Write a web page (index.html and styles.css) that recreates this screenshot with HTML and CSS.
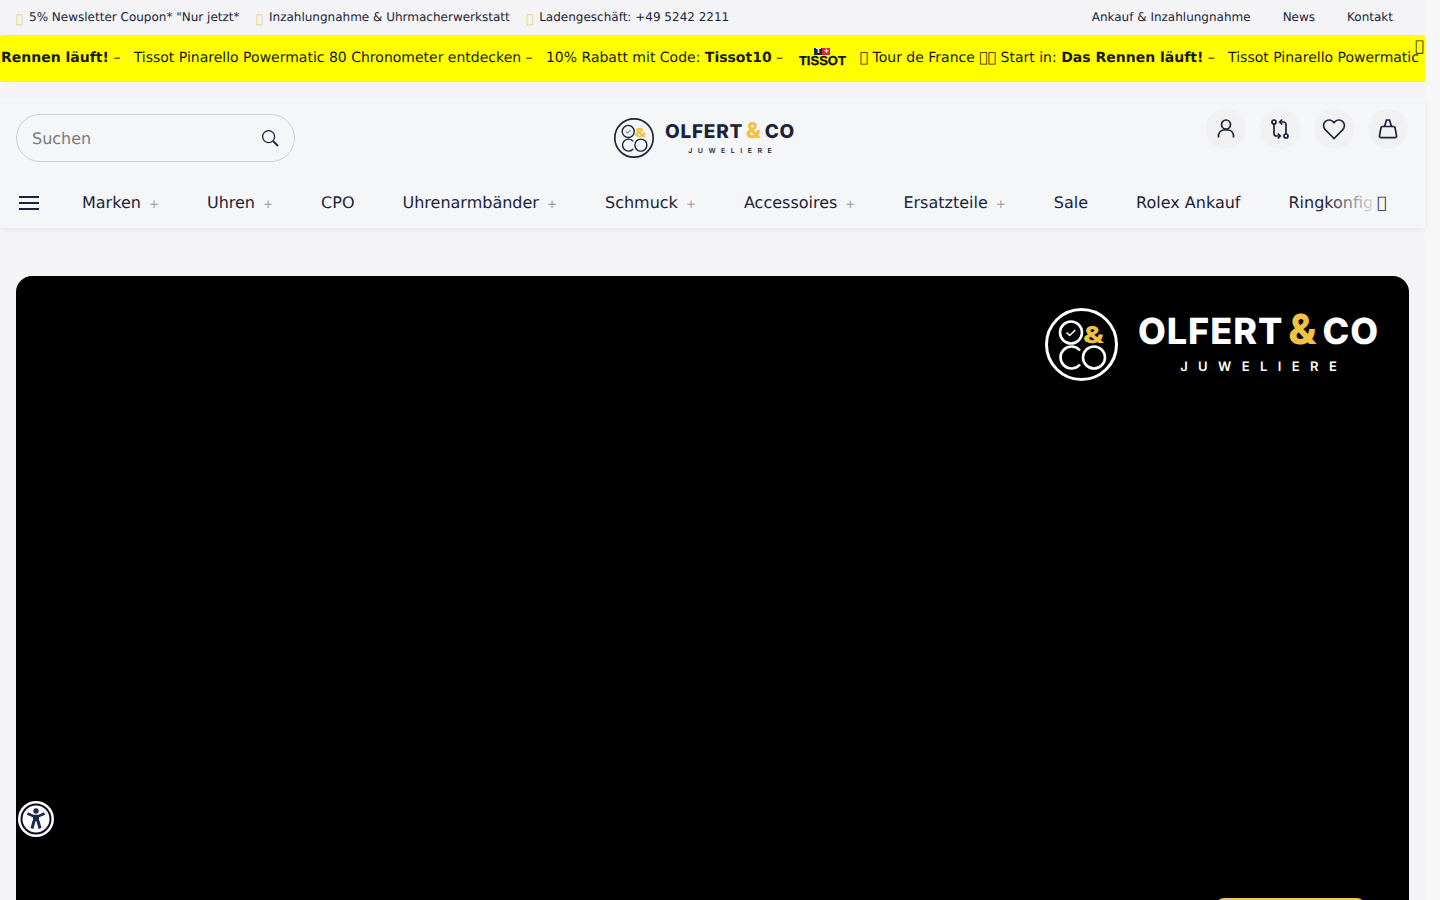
FILE: index.html
```html
<!DOCTYPE html>
<html lang="de">
<head>
  <meta charset="UTF-8">
  <title>Olfert &amp; Co Juweliere</title>
  <link rel="stylesheet" href="styles.css">
</head>
<body>
  <svg class="defs" width="0" height="0" aria-hidden="true">
    <symbol id="logo-mark" viewBox="0 0 73 73">
      <circle cx="36.5" cy="36.5" r="35" fill="none" stroke="currentColor" stroke-width="3"/>
      <circle cx="26" cy="24.5" r="11" fill="none" stroke="currentColor" stroke-width="2.6"/>
      <path d="M21.5 24.500l3.200 3 5.500-5.500" fill="none" stroke="currentColor" stroke-width="1.5"/>
      <path d="M35 42.500a11 11 0 1 0 0 14" fill="none" stroke="currentColor" stroke-width="2.6"/>
      <circle cx="49" cy="49.500" r="11" fill="none" stroke="currentColor" stroke-width="2.6"/>
      <text x="38" y="35" class="mark-amp" textLength="21" lengthAdjust="spacingAndGlyphs">&amp;</text>
    </symbol>
  </svg>

  <div class="page">
    <div class="topbar">
      <div class="topbar-left">
        <span class="usp"><i class="tofu tofu-gold">&#xf0e0;</i>5% Newsletter Coupon* "Nur jetzt*</span>
        <span class="usp"><i class="tofu tofu-gold">&#xf0e0;</i>Inzahlungnahme &amp; Uhrmacherwerkstatt</span>
        <span class="usp"><i class="tofu tofu-gold">&#xf0e0;</i>Ladengeschäft: +49 5242 2211</span>
      </div>
      <div class="topbar-right">
        <a>Ankauf &amp; Inzahlungnahme</a>
        <a>News</a>
        <a>Kontakt</a>
      </div>
    </div>

    <div class="promo">
      <div class="promo-track">
        <span><b>Rennen läuft!</b> –</span>
        <span>Tissot Pinarello Powermatic 80 Chronometer entdecken –</span>
        <span>10% Rabatt mit Code: <b>Tissot10</b> –</span>
        <span class="tissot">
          <span class="tissot-mark"><i>T</i><i class="tissot-cross">+</i></span>
          <span class="tissot-name">TISSOT</span>
        </span>
        <span>&#xf0e0; Tour de France &#xf0e0;&#xf0e0; Start in: <b>Das Rennen läuft!</b> –</span>
        <span>Tissot Pinarello Powermatic</span>
      </div>
      <span class="promo-close">&#xf0e0;</span>
    </div>

    <header class="header">
      <div class="header-top">
        <div class="search">
          <span class="search-text">Suchen</span>
          <svg width="18" height="18" viewBox="0 0 18 18" fill="none" stroke="#1b2338" stroke-width="1.3">
            <circle cx="7.6" cy="7.6" r="6"/>
            <path d="M12 12l5 5" stroke-width="1.8"/>
          </svg>
        </div>

        <a class="logo logo-small">
          <svg class="logo-icon"><use href="#logo-mark"/></svg>
          <span class="logo-words">
            <span class="logo-name">OLFERT <em>&amp;</em> CO</span>
            <span class="logo-sub">JUWELIERE</span>
          </span>
        </a>

        <div class="header-icons">
          <a class="round-btn">
            <svg width="24" height="24" viewBox="0 0 24 24" fill="none" stroke="#1b2338" stroke-width="1.7">
              <circle cx="12" cy="7.5" r="4.5"/>
              <path d="M4.5 20.5v-1.5a6 6 0 0 1 5-6h5a6 6 0 0 1 5 6v1.5"/>
            </svg>
          </a>
          <a class="round-btn">
            <svg width="24" height="24" viewBox="0 0 24 24" fill="none" stroke="#1b2338" stroke-width="1.7">
              <circle cx="6" cy="5" r="2"/>
              <circle cx="18" cy="19" r="2"/>
              <path d="M6 7v9.500a2.500 2.500 0 0 0 2.500 2.500H12"/>
              <path d="M9.800 16.500l2.500 2.500-2.500 2.500"/>
              <path d="M18 17V7.500A2.500 2.500 0 0 0 15.500 5H12"/>
              <path d="M14.200 2.500L11.700 5l2.500 2.500"/>
            </svg>
          </a>
          <a class="round-btn">
            <svg width="24" height="24" viewBox="0 0 24 24" fill="none" stroke="#1b2338" stroke-width="1.6">
              <path d="M12 21.500L3.200 12.600a5.700 5.700 0 0 1 0-8 5.500 5.500 0 0 1 7.800 0l1 1 1-1a5.500 5.500 0 0 1 7.800 0 5.700 5.700 0 0 1 0 8z"/>
            </svg>
          </a>
          <a class="round-btn">
            <svg width="24" height="24" viewBox="0 0 24 24" fill="none" stroke="#1b2338" stroke-width="1.7">
              <path d="M6.500 9.500h11c.8 0 1.300.4 1.500 1.200l1.500 8c.2 1.300-.6 2-1.700 2H5.200c-1.100 0-1.900-.7-1.700-2l1.500-8c.2-.8.700-1.200 1.500-1.200z"/>
              <path d="M8.500 9.500L10.500 3h3l2 6.500"/>
            </svg>
          </a>
        </div>
      </div>

      <nav class="nav">
        <svg class="burger" width="20" height="14" viewBox="0 0 20 14" stroke="#1b2338" stroke-width="1.800">
          <path d="M0 1h20M0 7h20M0 13h20"/>
        </svg>
        <div class="nav-list">
          <a>Marken<small>+</small></a>
          <a>Uhren<small>+</small></a>
          <a>CPO</a>
          <a>Uhrenarmbänder<small>+</small></a>
          <a>Schmuck<small>+</small></a>
          <a>Accessoires<small>+</small></a>
          <a>Ersatzteile<small>+</small></a>
          <a>Sale</a>
          <a>Rolex Ankauf</a>
          <a>Ringkonfig</a>
        </div>
        <span class="nav-fade"></span>
        <span class="nav-next">&#xf0e0;</span>
      </nav>
    </header>

    <section class="hero">
      <a class="logo logo-big">
        <svg class="logo-icon"><use href="#logo-mark"/></svg>
        <span class="logo-words">
          <span class="logo-name">OLFERT <em>&amp;</em> CO</span>
          <span class="logo-sub">JUWELIERE</span>
        </span>
      </a>
      <span class="hero-btn"></span>
    </section>
  </div>

  <a class="a11y">
    <svg width="36" height="36" viewBox="0 0 36 36">
      <circle cx="18" cy="18" r="18" fill="#fff"/>
      <circle cx="18" cy="18" r="15.500" fill="#0b1020"/>
      <circle cx="18" cy="18" r="13.500" fill="#fff"/>
      <circle cx="18" cy="10" r="2.700" fill="#1b2a4e"/>
      <path d="M9.500 12.500L15 15h6l5.500-2.500" fill="none" stroke="#1b2a4e" stroke-width="2.600"/>
      <path d="M15 14.500h6v6h-6z" fill="#1b2a4e"/>
      <path d="M16 20l-2 7.500M20 20l2 7.500" fill="none" stroke="#1b2a4e" stroke-width="3"/>
    </svg>
  </a>
</body>
</html>
```

FILE: styles.css
```css
* {
  box-sizing: border-box;
}

html,
body {
  height: 100%;
  margin: 0;
  overflow: hidden;
}

body {
  background: #f7f7f8;
  font-family: "DejaVu Sans", sans-serif;
  color: #1b2338;
  text-rendering: geometricPrecision;
}

a {
  color: inherit;
  text-decoration: none;
}

.defs {
  position: absolute;
}

.page {
  width: 1425px;
  background: #f4f4f6;
}

/* top bar */
.topbar {
  display: flex;
  justify-content: space-between;
  align-items: center;
  height: 35px;
  padding: 0 32px 1px 16px;
  font-size: 12px;
}

.topbar-left {
  display: flex;
  gap: 16.5px;
}

.usp {
  display: flex;
  align-items: center;
}

.tofu {
  font-style: normal;
  width: 13px;
}

.tofu-gold {
  color: #e8cf7c;
  padding-top: 3px;
}

.topbar-right {
  display: flex;
  gap: 32px;
}

/* yellow promo strip */
.promo {
  position: relative;
  height: 47px;
  background: #ffff00;
  border-radius: 2px;
  overflow: hidden;
  font-size: 14px;
  color: #1a1a10;
}

.promo-track {
  display: flex;
  align-items: center;
  gap: 13.3px;
  height: 100%;
  padding: 0 0 2px 1px;
  white-space: nowrap;
}

.tissot {
  display: flex;
  flex-direction: column;
  align-items: center;
  width: 48px;
  margin: -2px 0 0 2px;
  color: #111;
}

.tissot-mark {
  display: flex;
  height: 7px;
  margin-bottom: 1px;
}

.tissot-mark i {
  width: 8px;
  background: #222;
  color: #fff;
  font-size: 7px;
  line-height: 7px;
  font-style: normal;
  font-weight: 700;
  text-align: center;
}

.tissot-mark .tissot-cross {
  background: #d9262c;
}

.tissot-name {
  font-family: "Liberation Sans", sans-serif;
  font-size: 13px;
  line-height: 10px;
  font-weight: 700;
  -webkit-text-stroke: 0.3px #111;
}

.promo-close {
  position: absolute;
  top: 2px;
  right: 1px;
  font-size: 15px;
  color: #33331a;
}

/* header */
.header {
  margin-top: 15px;
  height: 131px;
  background: #f5f6f7;
  box-shadow: 0 2px 6px rgba(0, 0, 0, 0.06);
}

.header-top {
  display: grid;
  grid-template-columns: 1fr auto 1fr;
  align-items: start;
  padding: 12px 17px 0 16px;
  height: 83px;
}

.search {
  display: flex;
  align-items: center;
  justify-content: space-between;
  width: 279px;
  height: 48px;
  margin-top: 5px;
  padding: 0 15px 0 15px;
  border: 1px solid #cfcfd2;
  border-radius: 24px;
  font-size: 16px;
  color: #7a7a7f;
}

.header-icons {
  display: flex;
  justify-content: flex-end;
  gap: 14px;
}

.round-btn {
  display: flex;
  align-items: center;
  justify-content: center;
  width: 40px;
  height: 40px;
  border-radius: 50%;
  background: #f1f1f3;
}

/* logo */
.logo {
  display: flex;
  align-items: center;
}

.logo-words {
  display: flex;
  flex-direction: column;
  align-items: center;
}

.logo-name {
  font-family: Inter, sans-serif;
  font-weight: 800;
  white-space: nowrap;
}

.logo-name em {
  font-style: normal;
  font-weight: 800;
  font-size: 1.15em;
  line-height: 1;
  color: #f0c243;
}

.logo-sub {
  font-family: Inter, sans-serif;
  font-weight: 600;
}

.mark-amp {
  font-family: Inter, sans-serif;
  font-size: 23px;
  font-weight: 800;
  fill: #f0c243;
}

.logo-small {
  gap: 11px;
  margin-top: 9px;
  padding-right: 15px;
  color: #1b2338;
}

.logo-small .logo-icon {
  width: 40px;
  height: 40px;
}

.logo-small .logo-words {
  margin-top: 1px;
}

.logo-small .logo-name {
  font-size: 19px;
  line-height: 22px;
  letter-spacing: 0.75px;
  word-spacing: -2px;
}

.logo-small .logo-sub {
  font-size: 7px;
  line-height: 12px;
  letter-spacing: 5.5px;
  padding-left: 5.5px;
  margin-top: 2px;
}

.logo-big {
  gap: 20px;
  color: #fff;
}

.logo-big .logo-icon {
  width: 73px;
  height: 73px;
}

.logo-big .logo-words {
  margin-top: -4px;
}

.logo-big .logo-name {
  font-size: 36px;
  line-height: 42px;
  letter-spacing: 1px;
  word-spacing: -4px;
}

.logo-big .logo-sub {
  font-size: 13px;
  line-height: 18px;
  letter-spacing: 10.4px;
  padding-left: 10.4px;
  margin-top: 6px;
}

/* nav */
.nav {
  position: relative;
  display: flex;
  align-items: center;
  height: 48px;
  padding: 0 16px 4px 19px;
  overflow: hidden;
}

.burger {
  flex: none;
  margin: 2px 43px 0 0;
}

.nav-list {
  display: flex;
  gap: 48px;
  white-space: nowrap;
  font-size: 16px;
}

.nav-list small {
  margin-left: 8px;
  font-size: 12px;
  color: #9a9a9f;
}

.nav-fade {
  position: absolute;
  top: 0;
  left: 1325px;
  width: 60px;
  height: 100%;
  background: linear-gradient(to right, rgba(245, 246, 247, 0), #f5f6f7 90%);
}

.nav-next {
  position: absolute;
  top: 13px;
  left: 1377px;
  font-size: 16px;
}

/* hero */
.hero {
  position: relative;
  display: flex;
  justify-content: flex-end;
  align-items: flex-start;
  height: 720px;
  margin: 48px 16px 0;
  padding: 32px 30px 32px 32px;
  background: #000;
  border-radius: 16px;
}

.hero-btn {
  position: absolute;
  top: 622px;
  left: 1200px;
  width: 149px;
  height: 48px;
  border-radius: 8px;
  background: #f6c25f;
}

/* accessibility button */
.a11y {
  position: fixed;
  left: 18px;
  top: 801px;
  width: 36px;
  height: 36px;
}
```
